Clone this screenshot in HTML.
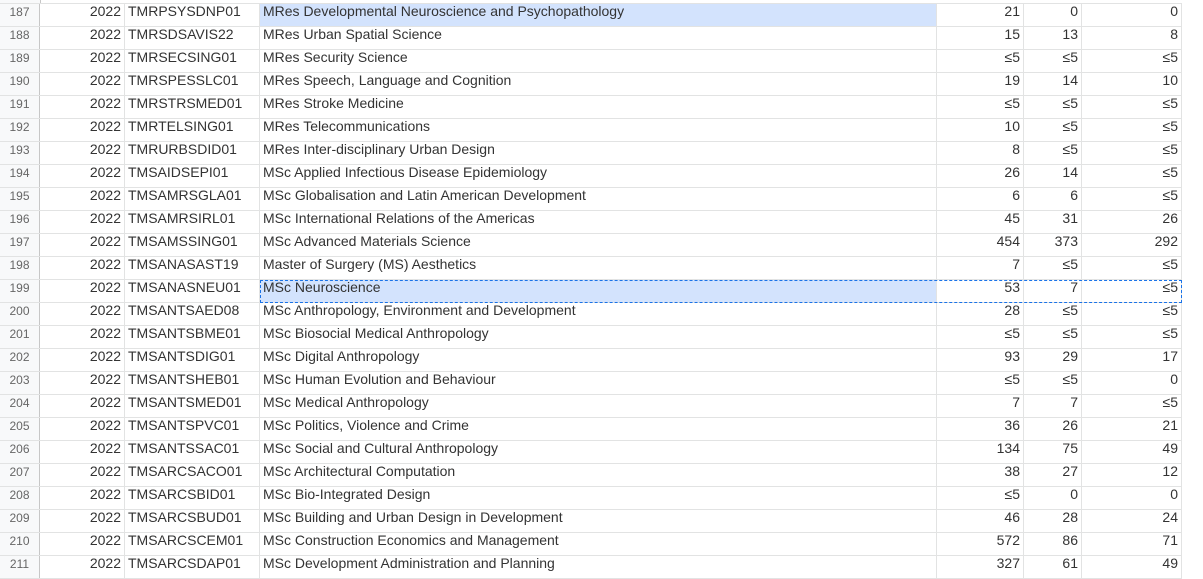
<!DOCTYPE html>
<html><head><meta charset="utf-8"><style>
body{margin:0;width:1203px;height:570px;overflow:hidden;background:#fff;font-family:"Liberation Sans",Arial,sans-serif;position:relative}
.r{position:absolute;left:0;height:23px;width:1182px;border-bottom:1px solid #e2e3e3;box-sizing:border-box;font-size:14px;color:#333}
.r div{position:absolute;top:0;height:22px;line-height:15px;border-right:1px solid #e2e3e3;box-sizing:border-box;padding:0 3px;white-space:nowrap;overflow:hidden}
.r .h{left:0;width:40px;background:#f8f9fa;color:#666;font-size:12px;text-align:center;border-right:1px solid #c7c7c7;line-height:17px}
.a{left:40px;width:85px;text-align:right}
.b{left:125px;width:135px}
.c{left:260px;width:677px}
.d{left:937px;width:87px;text-align:right}
.e{left:1024px;width:58px;text-align:right}
.f{left:1082px;width:100px;text-align:right}
.sel .c{background:#d3e3fd}
#dash{position:absolute;left:260px;top:280px;width:922px;height:23px;border:1px dashed #1a73e8;box-sizing:border-box}
#top{position:absolute;left:0;top:0;width:1182px;height:3px;border-bottom:1px solid #e2e3e3}
#top div{position:absolute;left:0;top:0;width:40px;height:3px;background:#f8f9fa;border-right:1px solid #c7c7c7}
</style></head><body>
<div id="top"><div></div></div>
<div class="r sel" style="top:4px"><div class="h">187</div><div class="a">2022</div><div class="b">TMRPSYSDNP01</div><div class="c">MRes Developmental Neuroscience and Psychopathology</div><div class="d">21</div><div class="e">0</div><div class="f">0</div></div>
<div class="r" style="top:27px"><div class="h">188</div><div class="a">2022</div><div class="b">TMRSDSAVIS22</div><div class="c">MRes Urban Spatial Science</div><div class="d">15</div><div class="e">13</div><div class="f">8</div></div>
<div class="r" style="top:50px"><div class="h">189</div><div class="a">2022</div><div class="b">TMRSECSING01</div><div class="c">MRes Security Science</div><div class="d">≤5</div><div class="e">≤5</div><div class="f">≤5</div></div>
<div class="r" style="top:73px"><div class="h">190</div><div class="a">2022</div><div class="b">TMRSPESSLC01</div><div class="c">MRes Speech, Language and Cognition</div><div class="d">19</div><div class="e">14</div><div class="f">10</div></div>
<div class="r" style="top:96px"><div class="h">191</div><div class="a">2022</div><div class="b">TMRSTRSMED01</div><div class="c">MRes Stroke Medicine</div><div class="d">≤5</div><div class="e">≤5</div><div class="f">≤5</div></div>
<div class="r" style="top:119px"><div class="h">192</div><div class="a">2022</div><div class="b">TMRTELSING01</div><div class="c">MRes Telecommunications</div><div class="d">10</div><div class="e">≤5</div><div class="f">≤5</div></div>
<div class="r" style="top:142px"><div class="h">193</div><div class="a">2022</div><div class="b">TMRURBSDID01</div><div class="c">MRes Inter-disciplinary Urban Design</div><div class="d">8</div><div class="e">≤5</div><div class="f">≤5</div></div>
<div class="r" style="top:165px"><div class="h">194</div><div class="a">2022</div><div class="b">TMSAIDSEPI01</div><div class="c">MSc Applied Infectious Disease Epidemiology</div><div class="d">26</div><div class="e">14</div><div class="f">≤5</div></div>
<div class="r" style="top:188px"><div class="h">195</div><div class="a">2022</div><div class="b">TMSAMRSGLA01</div><div class="c">MSc Globalisation and Latin American Development</div><div class="d">6</div><div class="e">6</div><div class="f">≤5</div></div>
<div class="r" style="top:211px"><div class="h">196</div><div class="a">2022</div><div class="b">TMSAMRSIRL01</div><div class="c">MSc International Relations of the Americas</div><div class="d">45</div><div class="e">31</div><div class="f">26</div></div>
<div class="r" style="top:234px"><div class="h">197</div><div class="a">2022</div><div class="b">TMSAMSSING01</div><div class="c">MSc Advanced Materials Science</div><div class="d">454</div><div class="e">373</div><div class="f">292</div></div>
<div class="r" style="top:257px"><div class="h">198</div><div class="a">2022</div><div class="b">TMSANASAST19</div><div class="c">Master of Surgery (MS) Aesthetics</div><div class="d">7</div><div class="e">≤5</div><div class="f">≤5</div></div>
<div class="r sel" style="top:280px"><div class="h">199</div><div class="a">2022</div><div class="b">TMSANASNEU01</div><div class="c">MSc Neuroscience</div><div class="d">53</div><div class="e">7</div><div class="f">≤5</div></div>
<div class="r" style="top:303px"><div class="h">200</div><div class="a">2022</div><div class="b">TMSANTSAED08</div><div class="c">MSc Anthropology, Environment and Development</div><div class="d">28</div><div class="e">≤5</div><div class="f">≤5</div></div>
<div class="r" style="top:326px"><div class="h">201</div><div class="a">2022</div><div class="b">TMSANTSBME01</div><div class="c">MSc Biosocial Medical Anthropology</div><div class="d">≤5</div><div class="e">≤5</div><div class="f">≤5</div></div>
<div class="r" style="top:349px"><div class="h">202</div><div class="a">2022</div><div class="b">TMSANTSDIG01</div><div class="c">MSc Digital Anthropology</div><div class="d">93</div><div class="e">29</div><div class="f">17</div></div>
<div class="r" style="top:372px"><div class="h">203</div><div class="a">2022</div><div class="b">TMSANTSHEB01</div><div class="c">MSc Human Evolution and Behaviour</div><div class="d">≤5</div><div class="e">≤5</div><div class="f">0</div></div>
<div class="r" style="top:395px"><div class="h">204</div><div class="a">2022</div><div class="b">TMSANTSMED01</div><div class="c">MSc Medical Anthropology</div><div class="d">7</div><div class="e">7</div><div class="f">≤5</div></div>
<div class="r" style="top:418px"><div class="h">205</div><div class="a">2022</div><div class="b">TMSANTSPVC01</div><div class="c">MSc Politics, Violence and Crime</div><div class="d">36</div><div class="e">26</div><div class="f">21</div></div>
<div class="r" style="top:441px"><div class="h">206</div><div class="a">2022</div><div class="b">TMSANTSSAC01</div><div class="c">MSc Social and Cultural Anthropology</div><div class="d">134</div><div class="e">75</div><div class="f">49</div></div>
<div class="r" style="top:464px"><div class="h">207</div><div class="a">2022</div><div class="b">TMSARCSACO01</div><div class="c">MSc Architectural Computation</div><div class="d">38</div><div class="e">27</div><div class="f">12</div></div>
<div class="r" style="top:487px"><div class="h">208</div><div class="a">2022</div><div class="b">TMSARCSBID01</div><div class="c">MSc Bio-Integrated Design</div><div class="d">≤5</div><div class="e">0</div><div class="f">0</div></div>
<div class="r" style="top:510px"><div class="h">209</div><div class="a">2022</div><div class="b">TMSARCSBUD01</div><div class="c">MSc Building and Urban Design in Development</div><div class="d">46</div><div class="e">28</div><div class="f">24</div></div>
<div class="r" style="top:533px"><div class="h">210</div><div class="a">2022</div><div class="b">TMSARCSCEM01</div><div class="c">MSc Construction Economics and Management</div><div class="d">572</div><div class="e">86</div><div class="f">71</div></div>
<div class="r" style="top:556px"><div class="h">211</div><div class="a">2022</div><div class="b">TMSARCSDAP01</div><div class="c">MSc Development Administration and Planning</div><div class="d">327</div><div class="e">61</div><div class="f">49</div></div>
<div id="dash"></div>
</body></html>
